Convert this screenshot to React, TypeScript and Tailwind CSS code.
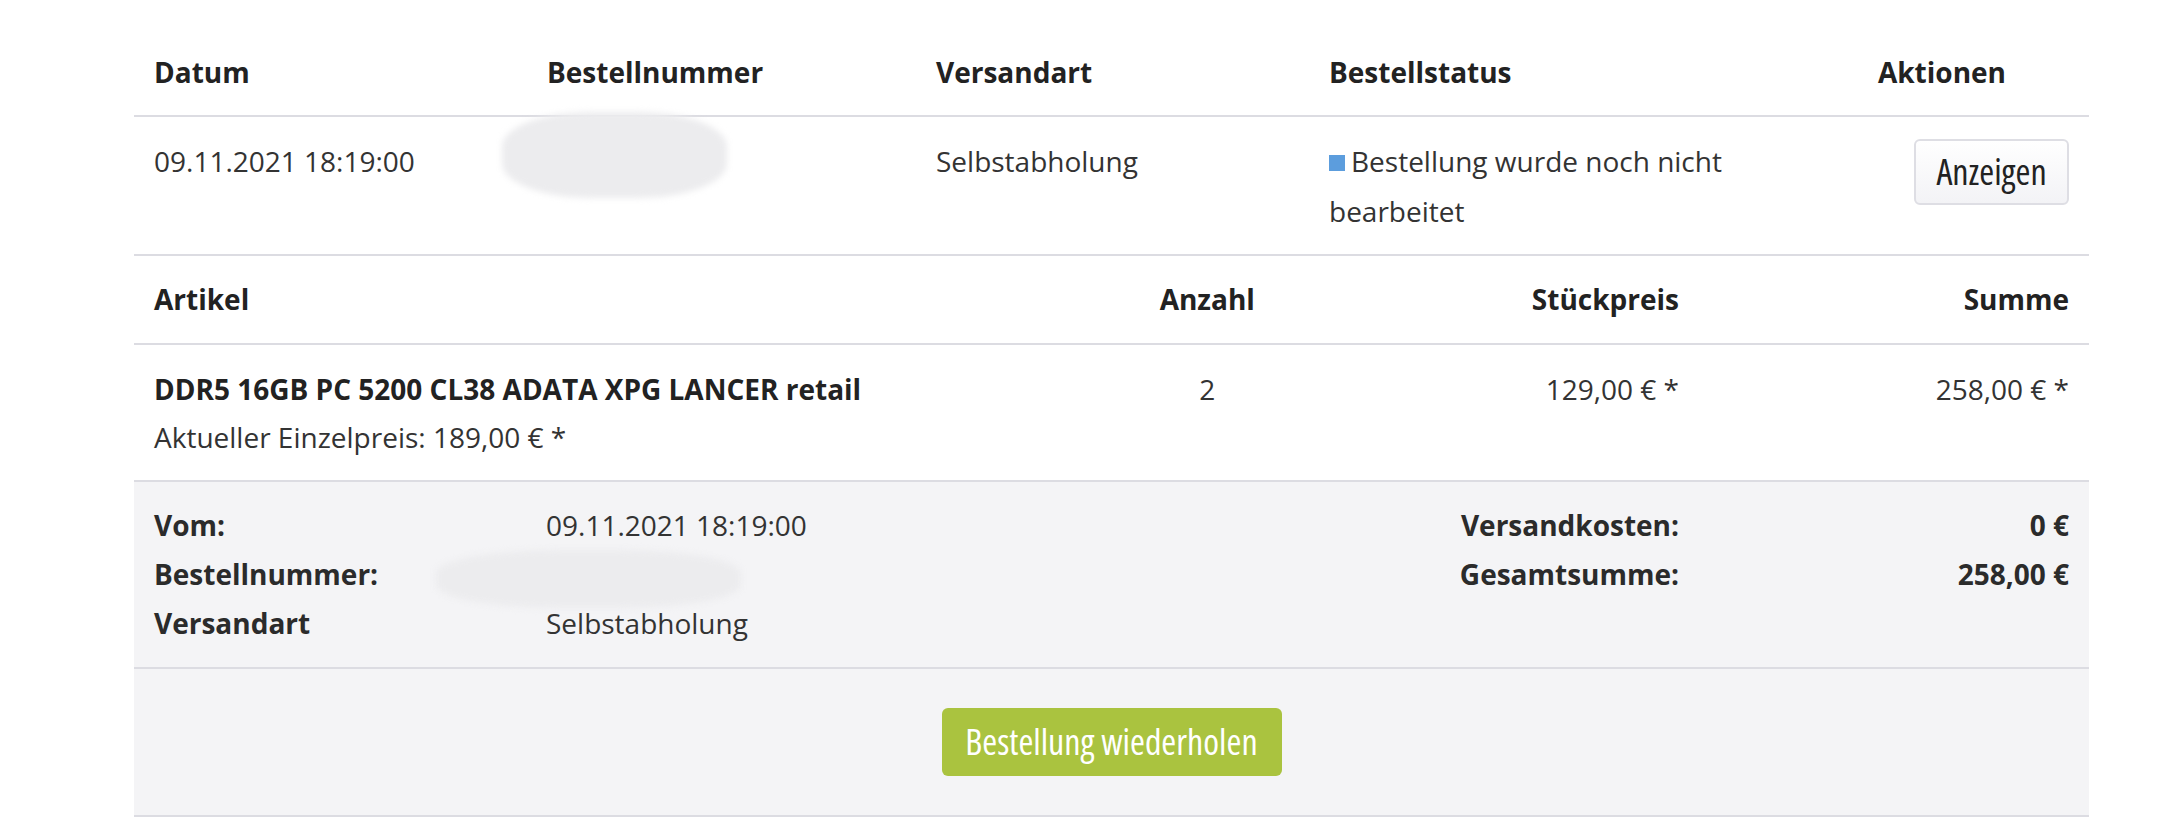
import React from 'react';

const line = 'border-b-2 border-[#dcdce2]';

function Blur({ className }: { className: string }) {
  return (
    <div
      className={`pointer-events-none absolute rounded-[40%] bg-[#ececee] blur-[3px] ${className}`}
    />
  );
}

const orderCols = 'grid grid-cols-[393px_389px_393px_420px_1fr] px-5';

export default function App() {
  return (
    <div className="min-h-[828px] bg-white font-['Open_Sans',sans-serif] text-[28px] leading-[50px] text-[#333]">
      <div className="ml-[134px] w-[1955px]">
        {/* order header */}
        <div className={`${orderCols} pt-[47px] pb-[18px] font-bold text-[#222] ${line}`}>
          <div>Datum</div>
          <div>Bestellnummer</div>
          <div>Versandart</div>
          <div>Bestellstatus</div>
          <div className="pr-[63px] text-right">Aktionen</div>
        </div>

        {/* order row */}
        <div className={`${orderCols} pt-[19px] pb-[18px] ${line}`}>
          <div>09.11.2021 18:19:00</div>
          <div className="relative">
            <Blur className="left-[-45px] top-[-24px] h-[86px] w-[225px]" />
          </div>
          <div>Selbstabholung</div>
          <div>
            <span className="mr-1.5 inline-block h-4 w-4 bg-[#5c9ddd] align-[1px]" />
            Bestellung wurde noch nicht bearbeitet
          </div>
          <div className="flex justify-end pt-[3px]">
            <button className="h-[66px] w-[155px] rounded-md border-2 border-[#dedee4] bg-gradient-to-b from-white to-[#f3f3f6] font-['Open_Sans',sans-serif] text-[36px] font-medium leading-none text-[#222] [font-stretch:condensed]">
              Anzeigen
            </button>
          </div>
        </div>

        {/* items header */}
        <div className={`grid grid-cols-10 px-5 pt-[18px] pb-[19px] font-bold text-[#222] ${line}`}>
          <div className="col-span-5">Artikel</div>
          <div className="text-center">Anzahl</div>
          <div className="col-span-2 pr-[7px] text-right">Stückpreis</div>
          <div className="col-span-2 text-right">Summe</div>
        </div>

        {/* item */}
        <div className={`grid grid-cols-10 px-5 pt-[19px] pb-[18px] ${line}`}>
          <div className="col-span-5">
            <div className="font-bold text-[#222]">DDR5 16GB PC 5200 CL38 ADATA XPG LANCER retail</div>
            <div className="-mt-0.5">Aktueller Einzelpreis: 189,00 € *</div>
          </div>
          <div className="text-center">2</div>
          <div className="col-span-2 pr-[7px] text-right">129,00 € *</div>
          <div className="col-span-2 text-right">258,00 € *</div>
        </div>

        {/* summary */}
        <div className={`grid grid-cols-10 bg-[#f4f4f6] px-5 pt-[19px] pb-[19px] leading-[49px] ${line}`}>
          <div className="col-span-2 font-bold text-[#2b2b2b]">
            <div>Vom:</div>
            <div>Bestellnummer:</div>
            <div>Versandart</div>
          </div>
          <div className="col-span-3 pl-[9px]">
            <div>09.11.2021 18:19:00</div>
            <div className="relative h-[49px]">
              <Blur className="left-[-110px] top-[0px] h-[58px] w-[305px]" />
            </div>
            <div>Selbstabholung</div>
          </div>
          <div />
          <div className="col-span-2 pr-[7px] text-right font-bold text-[#2b2b2b]">
            <div>Versandkosten:</div>
            <div>Gesamtsumme:</div>
          </div>
          <div className="col-span-2 text-right font-bold text-[#2b2b2b]">
            <div>0 €</div>
            <div>258,00 €</div>
          </div>
        </div>

        {/* reorder */}
        <div className={`flex justify-center bg-[#f4f4f6] py-[39px] ${line}`}>
          <button className="h-[68px] w-[340px] rounded-md bg-[#aac33f] font-['Open_Sans',sans-serif] text-[36px] font-medium leading-none text-white [font-stretch:condensed]">
            Bestellung wiederholen
          </button>
        </div>
      </div>
    </div>
  );
}
